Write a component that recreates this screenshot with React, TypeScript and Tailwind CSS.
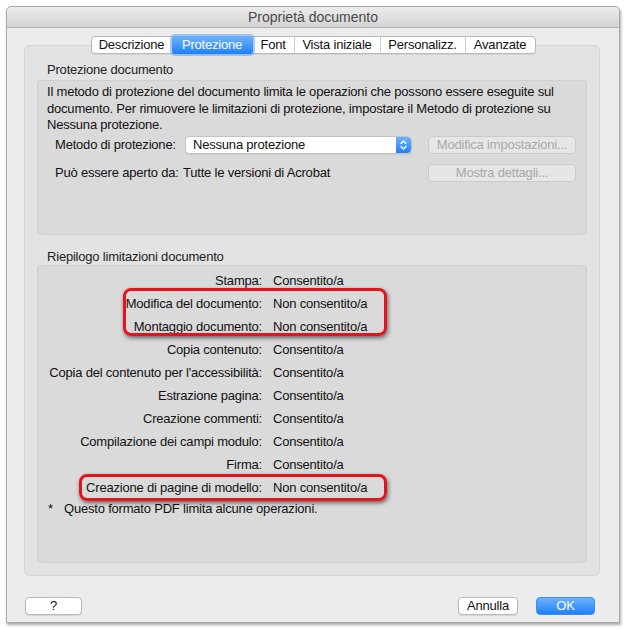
import React from "react";

const tabs = [
  { title: "Descrizione", w: "w-[80px]" },
  { title: "Protezione", w: "w-[81px]", active: true },
  { title: "Font", w: "w-[41px]" },
  { title: "Vista iniziale", w: "w-[86px]" },
  { title: "Personalizz.", w: "w-[85px]" },
  { title: "Avanzate", w: "w-[70px]" },
];

const limits = [
  { label: "Stampa:", value: "Consentito/a" },
  { label: "Modifica del documento:", value: "Non consentito/a" },
  { label: "Montaggio documento:", value: "Non consentito/a" },
  { label: "Copia contenuto:", value: "Consentito/a" },
  { label: "Copia del contenuto per l'accessibilità:", value: "Consentito/a" },
  { label: "Estrazione pagina:", value: "Consentito/a" },
  { label: "Creazione commenti:", value: "Consentito/a" },
  { label: "Compilazione dei campi modulo:", value: "Consentito/a" },
  { label: "Firma:", value: "Consentito/a" },
  { label: "Creazione di pagine di modello:", value: "Non consentito/a" },
];

const font = { fontFamily: '"Helvetica Neue", "Liberation Sans", Arial, sans-serif' };

function Stepper() {
  return (
    <div className="w-[15px] h-full rounded-r-[4px] bg-gradient-to-b from-[#6ab2fb] to-[#1b7ff9] flex items-center justify-center">
      <svg width="9" height="12" viewBox="0 0 9 12" fill="none" stroke="white" strokeWidth="1.4" strokeLinecap="round" strokeLinejoin="round">
        <path d="M2 4.5 L4.5 2 L7 4.5" />
        <path d="M2 7.5 L4.5 10 L7 7.5" />
      </svg>
    </div>
  );
}

export default function App() {
  return (
    <div className="w-[626px] h-[630px] bg-white pt-[6px] pl-[6px] text-[13px] tracking-[-0.2px] text-[#111]" style={font}>
      <div className="w-[614px] h-[617px] bg-[#ececec] border border-[#a9a9a9] rounded-t-[5px] shadow-[1px_2px_3px_rgba(0,0,0,0.35)] flex flex-col">
        {/* barra del titolo */}
        <div className="h-[21px] rounded-t-[5px] bg-gradient-to-b from-[#ececec] to-[#d4d4d4] border-b border-[#b1b1b1] flex items-center justify-center text-[#4a4a4a] text-[14px] tracking-normal">
          Proprietà documento
        </div>

        {/* schede */}
        <div className="flex justify-center mt-[8px] relative z-10">
          <div className="flex h-[18px] bg-white border border-[#b8b8b8] rounded-[4px] shadow-[0_1px_0_rgba(0,0,0,0.06)]">
            {tabs.map((t, i) =>
              t.active ? (
                <div
                  key={t.title}
                  className={`${t.w} -my-px flex items-center justify-center text-white rounded-[3px] bg-gradient-to-b from-[#6db3fb] to-[#1c80fa] shadow-[0_0_0_2px_rgba(110,170,240,0.6)]`}
                >
                  {t.title}
                </div>
              ) : (
                <div
                  key={t.title}
                  className={`${t.w} flex items-center justify-center ${i > 0 && !tabs[i - 1].active ? "border-l border-[#cfcfcf]" : ""}`}
                >
                  {t.title}
                </div>
              )
            )}
          </div>
        </div>

        {/* pannello */}
        <div className="ml-[17px] -mt-[9px] w-[576px] h-[531px] bg-[#e3e3e3] border border-[#d6d6d6] rounded-[5px] px-[12px] pt-[16px]">
          <div className="pl-[10px] leading-[16px] text-[#222]">Protezione documento</div>
          <div className="mt-[2px] h-[155px] bg-[#dadada] border border-[#cfcfcf] rounded-[4px] pt-[3px] pl-[9px]">
            <p className="leading-[16.5px]">
              Il metodo di protezione del documento limita le operazioni che possono essere eseguite sul
              documento. Per rimuovere le limitazioni di protezione, impostare il Metodo di protezione su
              Nessuna protezione.
            </p>
            <div className="flex items-center mt-[2px] h-[18px]">
              <div className="pl-[8px] w-[136px]">Metodo di protezione:</div>
              <div className="ml-[2px] w-[227px] h-[18px] bg-white border border-[#c3c3c3] rounded-[4px] flex shadow-[0_1px_1px_rgba(0,0,0,0.08)]">
                <div className="flex-1 pl-[7px] leading-[16px]">Nessuna protezione</div>
                <Stepper />
              </div>
              <div className="ml-[16px] w-[148px] h-[18px] border border-[#cbcbcb] rounded-[4px] bg-[#e6e6e6] text-[#a9a9a9] flex items-center justify-center">
                Modifica impostazioni...
              </div>
            </div>
            <div className="flex items-center mt-[10px] h-[18px]">
              <div className="pl-[8px] w-[136px]">Può essere aperto da:</div>
              <div className="w-[229px]">Tutte le versioni di Acrobat</div>
              <div className="ml-[16px] w-[148px] h-[18px] border border-[#cbcbcb] rounded-[4px] bg-[#e6e6e6] text-[#a9a9a9] flex items-center justify-center">
                Mostra dettagli...
              </div>
            </div>
          </div>

          <div className="pl-[10px] mt-[14px] leading-[16px] text-[#222]">Riepilogo limitazioni documento</div>
          <div className="relative h-[298px] bg-[#dadada] border border-[#cfcfcf] rounded-[4px] pt-[3px]">
            {limits.map((r) => (
              <div key={r.label} className="flex items-center h-[23px]">
                <div className="w-[224px] text-right">{r.label}</div>
                <div className="ml-[11px]">{r.value}</div>
              </div>
            ))}
            <div className="flex mt-[2px] leading-[16px]">
              <span className="ml-[10px] w-[16px]">*</span>
              <span>Questo formato PDF limita alcune operazioni.</span>
            </div>

            {/* evidenziazioni */}
            <div className="absolute left-[85px] top-[22px] w-[264px] h-[48px] border-[3px] border-[#e4141c] rounded-[8px] shadow-[1px_2px_4px_rgba(0,0,0,0.55)]" />
            <div className="absolute left-[41px] top-[208px] w-[308px] h-[27px] border-[3px] border-[#e4141c] rounded-[8px] shadow-[1px_2px_4px_rgba(0,0,0,0.55)]" />
          </div>
        </div>

        {/* pulsanti */}
        <div className="flex items-center mt-[21px] px-[18px]">
          <div className="w-[57px] h-[18px] bg-white border border-[#b9b9b9] rounded-[4px] shadow-[0_1px_1px_rgba(0,0,0,0.1)] flex items-center justify-center">
            ?
          </div>
          <div className="flex-1" />
          <div className="w-[60px] h-[18px] bg-white border border-[#b9b9b9] rounded-[4px] shadow-[0_1px_1px_rgba(0,0,0,0.1)] flex items-center justify-center">
            Annulla
          </div>
          <div className="ml-[18px] w-[59px] h-[18px] rounded-[4px] bg-gradient-to-b from-[#6ab2fb] to-[#1c80fa] border border-[#3f8ff0] text-white flex items-center justify-center">
            OK
          </div>
          <div className="w-[6px]" />
        </div>
      </div>
    </div>
  );
}
